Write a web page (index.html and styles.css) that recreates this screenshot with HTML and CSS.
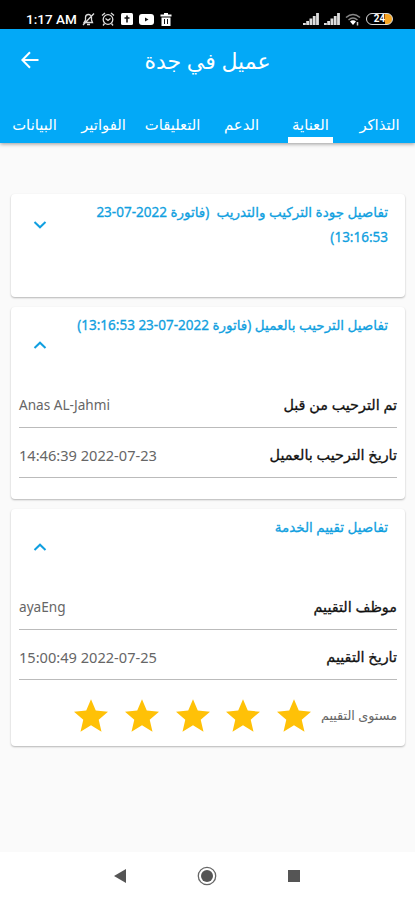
FILE: index.html
```
<!DOCTYPE html>
<html lang="ar" dir="rtl">
<head>
  <meta charset="UTF-8" />
  <meta name="viewport" content="width=device-width, initial-scale=1.0" />
  <title>عميل في جدة</title>
  <link rel="stylesheet" href="styles.css">
</head>
<body>
  <div class="status" dir="ltr">
    <span class="time">1:17 AM</span>
    <div class="status-left">
      <svg width="13" height="14" viewBox="0 0 13 14" fill="none" stroke="#ddd" stroke-width="1.3"><path d="M2 10.500h8.500L9.500 8V5.500a3 3 0 0 0-6 0V8zM5 12.500h3M12 1.500L1 13"/></svg>
      <svg width="14" height="14" viewBox="0 0 14 14" fill="none" stroke="#ddd" stroke-width="1.3"><circle cx="7" cy="7.500" r="4.800"/><path d="M1 3.500L4 1M13 3.500L10 1M4.500 6.500L7 8.500l2.500-2M3.500 11.500L2 13.500M10.500 11.500l1.500 2"/></svg>
      <svg width="12" height="12" viewBox="0 0 12 12"><rect width="12" height="12" rx="1.500" fill="#fff"/><path d="M6 2.500V9.500M3.500 5h5" stroke="#111" stroke-width="1.600"/></svg>
      <svg width="15" height="11" viewBox="0 0 15 11"><rect width="15" height="11" rx="3" fill="#fff"/><path d="M6 3.500v4l3.500-2z" fill="#111"/></svg>
      <svg width="12" height="13" viewBox="0 0 12 13"><path d="M0.500 1.500h3.500V0h4v1.500h3.500v2h-11zM1.500 4.500h9V13h-9z" fill="#fff"/><path d="M4.500 6v5M7.500 6v5" stroke="#111"/></svg>
    </div>
    <div class="status-right">
      <svg width="16" height="12" viewBox="0 0 16 12" fill="#ddd"><path d="M0 12v-2h2.800v2zM3.200 12V8h2.800v4zM6.500 12V5.500h2.800V12zM9.800 12V3h2.800v9zM13.100 12V0h2.800v12z"/></svg>
      <svg width="16" height="12" viewBox="0 0 16 12" fill="#ddd"><path d="M0 12v-2h2.800v2zM3.200 12V8h2.800v4zM6.500 12V5.500h2.800V12zM9.800 12V3h2.800v9zM13.100 12V0h2.800v12z"/></svg>
      <svg width="16" height="13" viewBox="0 0 16 13" fill="none" stroke="#888" stroke-width="1.500"><path d="M1 4.500q7-6 14 0M3.500 7q4.500-4 9 0"/><path d="M5 8.500q3-2.500 6 0L8 12z" fill="#fff" stroke="none"/><path d="M12.500 9v3.500" stroke="#ccc"/></svg>
      <span class="battery">24</span>
    </div>
  </div>

  <header>
    <div class="app-bar">
      <h1>عميل في جدة</h1>
      <svg width="18" height="18" viewBox="0 0 18 18" fill="none" stroke="#fff" stroke-width="2"><path d="M17.500 9H2M9 1.300L1.400 9L9 16.700"/></svg>
    </div>
    <nav>
      <a class="tab">التذاكر</a>
      <a class="tab active">العناية</a>
      <a class="tab">الدعم</a>
      <a class="tab">التعليقات</a>
      <a class="tab">الفواتير</a>
      <a class="tab">البيانات</a>
    </nav>
  </header>

  <main>
    <section class="card install">
      <div class="card-head">
        <h2>تفاصيل جودة التركيب والتدريب &nbsp;(فاتورة 2022-07-23<br>13:16:53)</h2>
        <svg class="chevron" width="14" height="8" viewBox="0 0 14 8"><path d="M1.500 1L7 6.300L12.500 1"/></svg>
      </div>
    </section>

    <section class="card welcome">
      <div class="card-head">
        <h2>تفاصيل الترحيب بالعميل (فاتورة 2022-07-23 13:16:53)</h2>
        <svg class="chevron" width="14" height="8" viewBox="0 0 14 8"><path d="M1.500 7L7 1.700L12.500 7"/></svg>
      </div>
      <div class="row"><span class="label">تم الترحيب من قبل</span><span class="value">Anas AL-Jahmi</span></div>
      <div class="row"><span class="label">تاريخ الترحيب بالعميل</span><span class="value date">2022-07-23 14:46:39</span></div>
    </section>

    <section class="card rating">
      <div class="card-head">
        <h2>تفاصيل تقييم الخدمة</h2>
        <svg class="chevron" width="14" height="8" viewBox="0 0 14 8"><path d="M1.500 7L7 1.700L12.500 7"/></svg>
      </div>
      <div class="row"><span class="label">موظف التقييم</span><span class="value">ayaEng</span></div>
      <div class="row"><span class="label">تاريخ التقييم</span><span class="value date">2022-07-25 15:00:49</span></div>
      <div class="stars-row">
        <span class="stars-label">مستوى التقييم</span>
        <div class="stars">
          <svg class="star" viewBox="2 2 20 19"><path d="M12 17.270L18.180 21l-1.640-7.030L22 9.240l-7.190-.61L12 2 9.190 8.630 2 9.240l5.460 4.730L5.820 21z"/></svg>
          <svg class="star" viewBox="2 2 20 19"><path d="M12 17.270L18.180 21l-1.640-7.030L22 9.240l-7.190-.61L12 2 9.190 8.630 2 9.240l5.460 4.730L5.820 21z"/></svg>
          <svg class="star" viewBox="2 2 20 19"><path d="M12 17.270L18.180 21l-1.640-7.030L22 9.240l-7.190-.61L12 2 9.190 8.630 2 9.240l5.460 4.730L5.820 21z"/></svg>
          <svg class="star" viewBox="2 2 20 19"><path d="M12 17.270L18.180 21l-1.640-7.030L22 9.240l-7.190-.61L12 2 9.190 8.630 2 9.240l5.460 4.730L5.820 21z"/></svg>
          <svg class="star" viewBox="2 2 20 19"><path d="M12 17.270L18.180 21l-1.640-7.030L22 9.240l-7.190-.61L12 2 9.190 8.630 2 9.240l5.460 4.730L5.820 21z"/></svg>
        </div>
      </div>
    </section>
  </main>

  <div class="system-nav" dir="ltr">
    <svg width="12" height="14" viewBox="0 0 12 14"><path d="M12 0v14L0 7z" fill="#555"/></svg>
    <svg width="20" height="20" viewBox="0 0 20 20"><circle cx="10" cy="10" r="8.700" fill="none" stroke="#666" stroke-width="1.300"/><circle cx="10" cy="10" r="6" fill="#555"/></svg>
    <svg width="12" height="12" viewBox="0 0 12 12"><rect width="12" height="12" fill="#555"/></svg>
  </div>
</body>
</html>
```
FILE: styles.css
```
* {
  box-sizing: border-box;
}
body {
  margin: 0;
  height: 900px;
  display: flex;
  flex-direction: column;
  background: #fafafa;
  font-family: "Noto Sans", "DejaVu Sans", sans-serif;
  overflow: hidden;
}
svg {
  display: block;
  flex: none;
}
.status {
  height: 29px;
  flex: none;
  display: flex;
  align-items: center;
  padding: 9px 22px 0 26px;
  background: #000;
  color: #fff;
}
.time {
  width: 56px;
  font: 500 13.5px Roboto, sans-serif;
  white-space: nowrap;
}
.status-left {
  display: flex;
  align-items: center;
  gap: 6px;
}
.status-right {
  display: flex;
  align-items: center;
  gap: 5px;
  margin-left: auto;
}
.battery {
  width: 27px;
  height: 12px;
  border: 1.5px solid #ddd;
  border-radius: 6px;
  background: linear-gradient(90deg, #000 70%, #f5a623 70%);
  font: bold 10px/9px Roboto, sans-serif;
  text-align: center;
}
header {
  height: 114px;
  flex: none;
  display: flex;
  flex-direction: column;
  background: #03a9f7;
  color: #fff;
  box-shadow: 0 1px 4px rgba(0, 0, 0, 0.4);
}
.app-bar {
  height: 62px;
  display: grid;
  grid-template-columns: 1fr auto 1fr;
  align-items: center;
  padding: 0 21px;
}
h1 {
  grid-column: 2;
  margin: 0;
  font-size: 22px;
  font-weight: normal;
  line-height: 30px;
}
.app-bar svg {
  justify-self: end;
}
nav {
  height: 52px;
  display: grid;
  grid-template-columns: repeat(6, 1fr);
  justify-items: center;
  padding-right: 1px;
}
.tab {
  min-width: 45px;
  padding-top: 21px;
  font-size: 14.8px;
  line-height: 24px;
  text-align: center;
  white-space: nowrap;
}
.tab.active {
  border-bottom: 6px solid #fff;
}
main {
  flex: 1;
  display: flex;
  flex-direction: column;
  gap: 10px;
  padding: 51px 10px 0 11px;
}
.card {
  background: #fff;
  border-radius: 4px;
  box-shadow: 0 1px 2px rgba(0, 0, 0, 0.28);
  padding: 0 8px;
}
.install {
  height: 103px;
}
.welcome {
  height: 192px;
}
.rating {
  height: 237px;
}
.card-head {
  height: 75px;
  display: flex;
  justify-content: space-between;
  align-items: flex-start;
  padding: 6px 9px 0 14px;
}
h2 {
  margin: 0;
  color: #109fe0;
  font-size: 13.5px;
  font-weight: normal;
  line-height: 25px;
  white-space: nowrap;
  -webkit-text-stroke: 0.3px #109fe0;
}
.chevron {
  fill: none;
  stroke: #109fe0;
  stroke-width: 2;
  margin-top: 28px;
}
.install .chevron {
  margin-top: 21px;
}
.row {
  height: 50px;
  display: flex;
  justify-content: space-between;
  padding-top: 15px;
  border-bottom: 1.5px solid #bbb;
  line-height: 24px;
}
.card-head + .row {
  height: 46px;
  padding-top: 11px;
}
.label {
  color: #111;
  font-size: 14.4px;
  -webkit-text-stroke: 0.3px #111;
}
.value {
  color: #666;
  font-size: 13.6px;
}
.date {
  font-size: 14.6px;
}
.stars-row {
  display: flex;
  align-items: center;
  height: 70px;
}
.stars-label {
  width: 86px;
  color: #666;
  font-size: 12.8px;
  white-space: nowrap;
}
.stars {
  display: flex;
  gap: 16.7px;
}
.star {
  width: 34px;
  height: 33px;
  fill: #ffc107;
}
.system-nav {
  height: 48px;
  flex: none;
  display: flex;
  justify-content: space-between;
  align-items: center;
  padding: 0 115px 0 114px;
  background: #fff;
}
```
